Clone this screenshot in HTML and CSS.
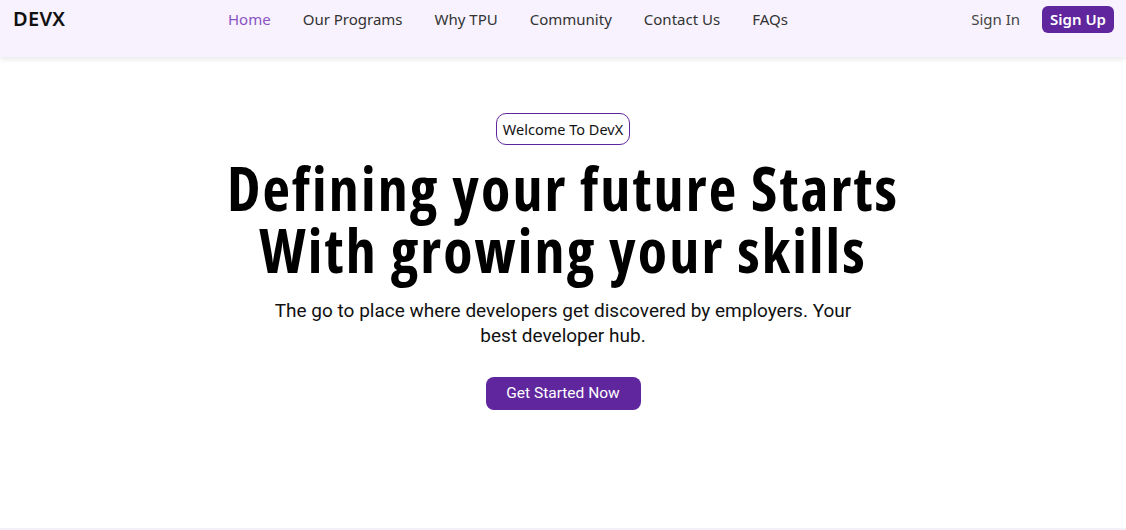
FILE: index.html
```html
<!DOCTYPE html>
<html lang="en">
<head>
<meta charset="utf-8">
<title>DevX</title>
<link rel="stylesheet" href="styles.css">
</head>
<body>
<header class="topbar">
  <div class="brand">DEVX</div>
  <nav class="menu">
    <a class="menu-link active" href="#">Home</a>
    <a class="menu-link" href="#">Our Programs</a>
    <a class="menu-link" href="#">Why TPU</a>
    <a class="menu-link" href="#">Community</a>
    <a class="menu-link" href="#">Contact Us</a>
    <a class="menu-link" href="#">FAQs</a>
  </nav>
  <div class="auth">
    <a class="signin" href="#">Sign In</a>
    <a class="signup" href="#">Sign Up</a>
  </div>
</header>
<main class="hero">
  <span class="badge">Welcome To DevX</span>
  <h1 class="title">Defining your future Starts<br>With growing your skills</h1>
  <p class="lead">The go to place where developers get discovered by employers. Your best developer hub.</p>
  <a class="cta" href="#">Get Started Now</a>
</main>
<div class="bottom-line"></div>
</body>
</html>
```
FILE: styles.css
```css
* { box-sizing: border-box; }
html, body { margin: 0; padding: 0; }
body {
  background: #fff;
  font-family: "Noto Sans", sans-serif;
  color: #111;
  height: 530px;
  display: flex;
  flex-direction: column;
}
a { text-decoration: none; }

.topbar {
  height: 57px;
  background: #f7f2fd;
  box-shadow: 0 2px 6px rgba(0,0,0,0.10);
  display: flex;
  align-items: flex-start;
  padding: 5px 12px 0 13px;
  position: relative;
  z-index: 1;
}
.brand {
  font-family: "Noto Sans", sans-serif;
  font-weight: 600;
  font-size: 20px;
  letter-spacing: 0.3px;
  color: #111;
  line-height: 28px;
  width: 215px;
}
.menu {
  display: flex;
  gap: 32px;
  line-height: 28px;
}
.menu-link {
  font-size: 15px;
  color: #333;
}
.menu-link.active { color: #8a52c4; }
.auth {
  margin-left: auto;
  display: flex;
  align-items: center;
  gap: 22px;
  height: 28px;
}
.signin { font-size: 15px; color: #444; }
.signup {
  background: #60269e;
  color: #fff;
  font-size: 15px;
  font-weight: 600;
  padding: 0 8px;
  height: 27px;
  line-height: 27px;
  border-radius: 6px;
}

.hero {
  flex: 1;
  display: flex;
  flex-direction: column;
  align-items: center;
  padding-top: 56px;
  text-align: center;
}
.badge {
  border: 1px solid #60269e;
  border-radius: 10px;
  padding: 0 6px;
  height: 32px;
  line-height: 30px;
  font-size: 14.5px;
  color: #111;
}
.title {
  margin: 12px 0 0;
  font-family: "Open Sans", sans-serif;
  font-stretch: 87.5%;
  font-weight: 700;
  font-size: 60px;
  letter-spacing: 2.1px;
  line-height: 62px;
  color: #000;
}
.lead {
  margin: 17px 0 0;
  width: 590px;
  font-family: Roboto, sans-serif;
  font-size: 19px;
  line-height: 25px;
  color: #111;
}
.cta {
  margin-top: 29px;
  background: #60269e;
  color: #fff;
  font-family: Roboto, sans-serif;
  font-size: 15.5px;
  width: 155px;
  height: 33px;
  line-height: 33px;
  border-radius: 8px;
}
.bottom-line {
  height: 2px;
  background: #f3f0fa;
}
```
